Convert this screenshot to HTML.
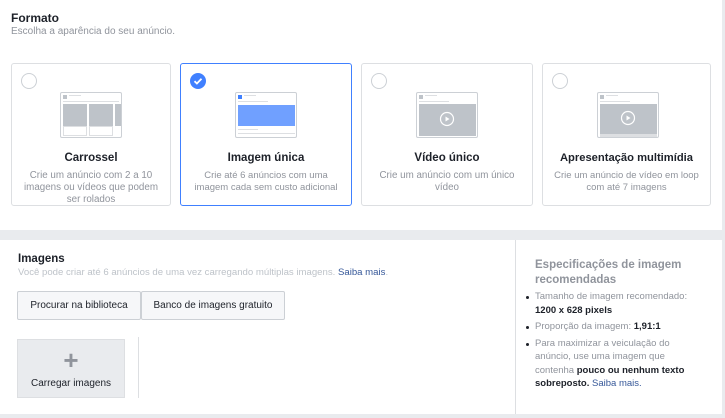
<!DOCTYPE html>
<html><head><meta charset="utf-8"><style>
*{box-sizing:border-box;margin:0;padding:0}
body{width:725px;height:418px;background:#e9ebee;font-family:"Liberation Sans",Arial,sans-serif;position:relative;overflow:hidden}
.top{position:absolute;left:0;top:0;width:722px;height:230px;background:#fff}
.bot{position:absolute;left:0;top:240px;width:722px;height:174px;background:#fff}
h1{position:absolute;left:11px;top:11px;font-size:12px;font-weight:bold;color:#1d2129}
.sub{position:absolute;left:11px;top:26px;font-size:10px;color:#90949c}
.card{position:absolute;top:63px;height:143px;border:1px solid #dddfe2;border-radius:3px;background:#fff;text-align:center}
.card.sel{border-color:#4080ff}
.radio{position:absolute;left:9px;top:9px;width:16px;height:16px;border:1px solid #ccd0d5;border-radius:50%}
.check{position:absolute;left:9px;top:9px;width:16px;height:16px;border-radius:50%;background:#4080ff}
.title{position:absolute;left:0;right:0;top:88px;font-size:11.5px;font-weight:bold;color:#1d2129;white-space:nowrap}
.desc{position:absolute;left:0;right:0;top:106px;font-size:9.8px;line-height:12px;color:#90949c;white-space:nowrap}
.thumb{position:absolute;top:28px;width:62px;height:46px;border:1px solid #ccd0d5;border-radius:2px;background:#fff;overflow:hidden}
h2{position:absolute;left:18px;top:253px;font-size:11.5px;font-weight:bold;color:#1d2129}
.s2{position:absolute;left:18px;top:267px;font-size:9.6px;color:#bec3c9;white-space:nowrap}
.s2 a{color:#365899;text-decoration:none}
.btn{position:absolute;top:291px;height:29px;border:1px solid #ccd0d5;border-radius:2px;background:#f6f7f9;font-size:10px;color:#1d2129;line-height:27px;text-align:center}
.up{position:absolute;left:17px;top:339px;width:108px;height:59px;background:#e9ebee;border:1px solid #dddfe2;text-align:center;font-size:10px;color:#1d2129}
.vl{position:absolute;left:138px;top:337px;width:1px;height:61px;background:#dddfe2}
.side{position:absolute;left:515px;top:240px;width:1px;height:174px;background:#dddfe2}
.r{position:absolute;left:535px;top:258px;width:185px;color:#90949c;font-size:9.5px;white-space:nowrap}
.r h3{font-size:11.5px;font-weight:bold;color:#90949c;line-height:14.5px;margin-bottom:3px}
.r ul{list-style:none}
.r li{position:relative;line-height:13.5px;margin-bottom:3px}
.r li:before{content:"";position:absolute;left:-9px;top:6px;width:3px;height:3px;border-radius:50%;background:#1d2129}
.r b{color:#1d2129}
.r a{color:#365899}
</style></head><body>
<div class="top"></div>
<div class="bot"></div>
<h1>Formato</h1>
<div class="sub">Escolha a aparência do seu anúncio.</div>

<div class="card" style="left:11px;width:160px">
<div class="radio"></div>
<div class="thumb" style="left:48px">
 <div style="position:absolute;left:2px;top:2px;width:4px;height:4px;background:#bec3c9"></div>
 <div style="position:absolute;left:8px;top:2px;width:12px;height:1px;background:#dddfe2"></div>
 <div style="position:absolute;left:2px;top:8px;width:56px;height:1px;background:#dddfe2"></div>
 <div style="position:absolute;left:2px;top:11px;width:24px;height:22px;background:#bec3c9"></div>
 <div style="position:absolute;left:28px;top:11px;width:24px;height:22px;background:#bec3c9"></div>
 <div style="position:absolute;left:54px;top:11px;width:8px;height:22px;background:#bec3c9"></div>
 <div style="position:absolute;left:2px;top:33px;width:24px;height:10px;border:1px solid #dddfe2"></div>
 <div style="position:absolute;left:28px;top:33px;width:24px;height:10px;border:1px solid #dddfe2"></div>
</div>
<div class="title">Carrossel</div>
<div class="desc">Crie um anúncio com 2 a 10<br>imagens ou vídeos que podem<br>ser rolados</div>
</div>

<div class="card sel" style="left:180px;width:172px">
<div class="check"><svg width="16" height="16"><path d="M4.5 8.2l2.4 2.3 4.6-4.7" stroke="#fff" stroke-width="1.8" fill="none"/></svg></div>
<div class="thumb" style="left:54px">
 <div style="position:absolute;left:2px;top:2px;width:4px;height:4px;background:#4080ff"></div>
 <div style="position:absolute;left:8px;top:2px;width:12px;height:1px;background:#dddfe2"></div>
 <div style="position:absolute;left:2px;top:8px;width:30px;height:1px;background:#dddfe2"></div>
 <div style="position:absolute;left:2px;top:12px;width:57px;height:21px;background:#4080ff;opacity:.75"></div>
 <div style="position:absolute;left:2px;top:36px;width:20px;height:1px;background:#dddfe2"></div>
 <div style="position:absolute;left:2px;top:40px;width:57px;height:1px;background:#dddfe2"></div>
</div>
<div class="title">Imagem única</div>
<div class="desc" style="font-size:9.5px">Crie até 6 anúncios com uma<br>imagem cada sem custo adicional</div>
</div>

<div class="card" style="left:361px;width:172px">
<div class="radio"></div>
<div class="thumb" style="left:54px">
 <div style="position:absolute;left:2px;top:2px;width:4px;height:4px;background:#bec3c9"></div>
 <div style="position:absolute;left:8px;top:2px;width:12px;height:1px;background:#dddfe2"></div>
 <div style="position:absolute;left:2px;top:8px;width:30px;height:1px;background:#dddfe2"></div>
 <div style="position:absolute;left:2px;top:11px;width:57px;height:32px;background:#bec3c9"></div>
 <svg style="position:absolute;left:22px;top:18px" width="16" height="16"><circle cx="8" cy="8" r="6.5" stroke="#fff" stroke-width="1.2" fill="none"/><path d="M6.5 5.5v5l4-2.5z" fill="#fff"/></svg>
</div>
<div class="title">Vídeo único</div>
<div class="desc">Crie um anúncio com um único<br>vídeo</div>
</div>

<div class="card" style="left:542px;width:169px">
<div class="radio"></div>
<div class="thumb" style="left:54px">
 <div style="position:absolute;left:2px;top:2px;width:4px;height:4px;background:#bec3c9"></div>
 <div style="position:absolute;left:8px;top:2px;width:12px;height:1px;background:#dddfe2"></div>
 <div style="position:absolute;left:2px;top:8px;width:30px;height:1px;background:#dddfe2"></div>
 <div style="position:absolute;left:2px;top:11px;width:57px;height:30px;background:#bec3c9"></div>
 <div style="position:absolute;left:2px;top:41px;width:57px;height:3px;background:#dddfe2"></div>
 <svg style="position:absolute;left:22px;top:17px" width="16" height="16"><circle cx="8" cy="8" r="6.5" stroke="#fff" stroke-width="1.2" fill="none"/><path d="M6.5 5.5v5l4-2.5z" fill="#fff"/></svg>
</div>
<div class="title" style="font-size:11.2px">Apresentação multimídia</div>
<div class="desc" style="font-size:9.5px">Crie um anúncio de vídeo em loop<br>com até 7 imagens</div>
</div>

<h2>Imagens</h2>
<div class="s2">Você pode criar até 6 anúncios de uma vez carregando múltiplas imagens. <a>Saiba mais</a>.</div>
<div class="btn" style="left:17px;width:124px">Procurar na biblioteca</div>
<div class="btn" style="left:141px;width:144px">Banco de imagens gratuito</div>
<div class="up"><div style="font-size:26px;color:#90949c;line-height:24px;margin-top:8px;font-weight:bold">+</div><div style="margin-top:6px">Carregar imagens</div></div>
<div class="vl"></div>
<div class="side"></div>
<div class="r">
<h3>Especificações de imagem<br>recomendadas</h3>
<ul>
<li>Tamanho de imagem recomendado:<br><b>1200 x 628 pixels</b></li>
<li>Proporção da imagem: <b>1,91:1</b></li>
<li>Para maximizar a veiculação do<br>anúncio, use uma imagem que<br>contenha <b>pouco ou nenhum texto<br>sobreposto.</b> <a>Saiba mais.</a></li>
</ul>
</div>
</body></html>
